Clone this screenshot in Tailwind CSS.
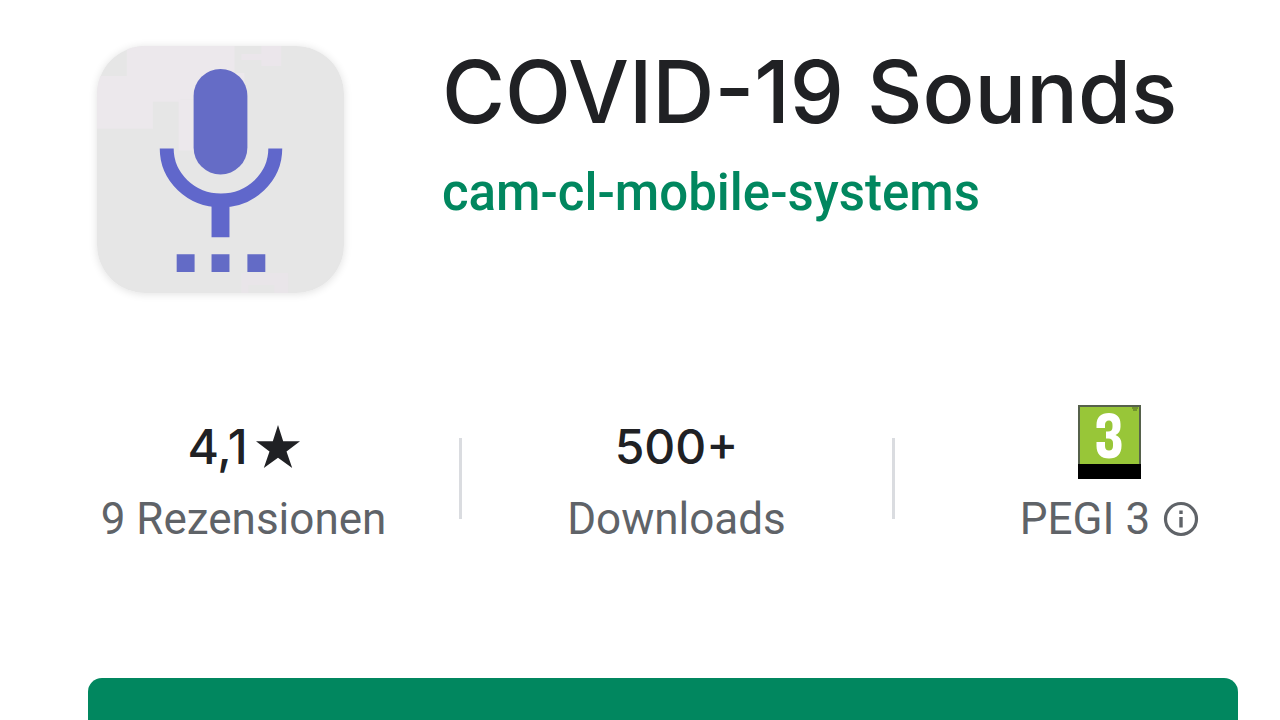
<!DOCTYPE html>
<html lang="de">
<head>
<meta charset="utf-8">
<meta name="viewport" content="width=device-width, initial-scale=1">
<title>COVID-19 Sounds</title>
<script src="https://cdn.jsdelivr.net/npm/@tailwindcss/browser@4"></script>
</head>
<body class="bg-white font-['Roboto',sans-serif]">
<main class="flex h-screen flex-col overflow-hidden">
  <header class="flex items-start gap-[98px] pt-[46px] pl-[97px]">
    <svg class="size-[247px] shrink-0 rounded-[48px] shadow-[0_1px_8px_rgba(0,0,0,0.12)]" viewBox="0 0 248 248" role="img" aria-label="App-Symbol">
      <rect width="248" height="248" fill="#e6e6e6"/>
      <path d="M30 0H138V27H148V54H84V56H56V83H0V30H30Z" fill="#ece8ec"/>
      <path d="M165 0H185V20H165V14H145V8H165Z" fill="#ebe6eb"/>
      <path d="M82 54H98V105H82Z" fill="#ece8ec"/>
      <path d="M145 228H192V248H178V240H152V248H145Z" fill="#e9e5e9"/>
      <rect x="97" y="23" width="54" height="106" rx="27" fill="#656cc6"/>
      <path d="M70 103a54.500 52 0 0 0 109 0" fill="none" stroke="#6067cb" stroke-width="14"/>
      <path d="M115 159h18v33h-18z" fill="#6067cb"/>
      <path d="M80 209h18v18H80zM115 209h18v18h-18zM151 209h18v18h-18z" fill="#636bc6"/>
    </svg>
    <div class="flex flex-col items-start whitespace-nowrap">
      <h1 class="text-[86px] leading-[92px] font-medium text-[#202124] font-['Inter',sans-serif]">COVID-19 Sounds</h1>
      <a href="#" class="mt-[25px] text-[51px] leading-[60px] font-medium text-[#01875f]">cam-cl-mobile-systems</a>
    </div>
  </header>

  <section class="mt-[112px] -mr-[46px] ml-[27px] grid grid-cols-3 whitespace-nowrap text-center text-[#5f6368]" aria-label="App-Informationen">
    <div class="relative flex flex-col items-center">
      <div class="flex h-[84px] items-center gap-[8px] text-[48px] leading-[60px] font-medium text-[#202124] font-['Inter',sans-serif]">4,1
        <svg class="size-[44px]" viewBox="0 0 44 44" fill="#202124" role="img" aria-label="Sterne"><path d="M22 0L27.2 16.3H44L30.5 26.4L36.2 43L22 32.8L7.8 43L13.5 26.4L0 16.3H16.8Z"/></svg>
      </div>
      <div class="text-[44px] leading-[60px]">9 Rezensionen</div>
      <span class="absolute top-[33px] -right-[2px] h-[81px] w-[3px] bg-[#dadce0]"></span>
    </div>
    <div class="relative flex flex-col items-center">
      <div class="flex h-[84px] items-center text-[48px] leading-[60px] font-medium text-[#202124] font-['Inter',sans-serif]">500+</div>
      <div class="text-[44px] leading-[60px]">Downloads</div>
      <span class="absolute top-[33px] -right-[2px] h-[81px] w-[3px] bg-[#dadce0]"></span>
    </div>
    <div class="flex flex-col items-center">
      <div class="flex h-[84px] items-start">
        <svg class="h-[74px] w-[63px]" viewBox="0 0 63 74" role="img" aria-label="PEGI 3">
          <rect width="63" height="74" fill="#56614b"/>
          <rect x="2" y="2" width="59" height="58" fill="#98c638"/>
          <rect y="59" width="63" height="15" fill="#000"/>
          <path d="M54 3h6M55 5h4" stroke="#4d6420" stroke-width="1"/>
          <path d="M18.500 23V20C18.500 12 23 8 31 8C38.500 8 42.500 12 42.500 19V22C42.500 26 40.500 28.500 37.500 30C41.500 31.500 43.500 34.500 43.500 39V41C43.500 49 39 53.500 31 53.500C23 53.500 18.500 49 18.500 41V37H27V41C27 44 28.500 45.500 31 45.500C33.500 45.500 35 44 35 41V38C35 35 33.500 33.500 30 33.500H28V26.500H30C33 26.500 34.500 25 34.500 22V20C34.500 17 33 15.500 31 15.500C28.500 15.500 27 17 27 20V23Z" fill="#fff"/>
        </svg>
      </div>
      <div class="flex items-center gap-[13px] text-[44px] leading-[60px]">PEGI 3
        <svg class="size-[36px]" viewBox="0 0 36 36" role="img" aria-label="Info"><circle cx="18" cy="18" r="15.500" fill="none" stroke="#5f6368" stroke-width="3.200"/><path d="M16.300 9.500h3.400v3.400h-3.400zM16.300 16h3.400v10.500h-3.400z" fill="#5f6368"/></svg>
      </div>
    </div>
  </section>

  <div class="mt-[129px] mr-[42px] ml-[88px] flex">
    <button type="button" aria-label="Installieren" class="h-[108px] flex-1 rounded-[14px] bg-[#01875f]"></button>
  </div>
</main>
</body>
</html>
